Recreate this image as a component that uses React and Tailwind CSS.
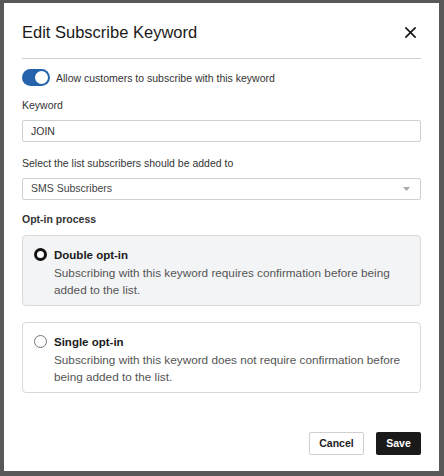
import { useState } from "react";

function Radio({ checked }) {
    if (checked) {
        return <span className="mt-[1px] h-[13px] w-[13px] shrink-0 rounded-full border-[3px] border-[#111] bg-white" />;
    }
    return <span className="mt-[1px] h-[13px] w-[13px] shrink-0 rounded-full border border-[#777] bg-white" />;
}

function OptionCard({ checked, title, text, onClick }) {
    return (
        <div
            onClick={onClick}
            className={`flex h-[71px] cursor-pointer gap-[7px] rounded border border-[#d9d9d9] pl-[11px] pr-[12px] pt-[11px] ${checked ? "bg-[#f3f4f6]" : "bg-white"}`}
        >
            <Radio checked={checked} />
            <div>
                <div className="text-[11.5px] font-bold leading-[16px] text-[#1a1a1a]">{title}</div>
                <div className="mt-[1px] text-[11.75px] leading-[17px] text-[#555]">{text}</div>
            </div>
        </div>
    );
}

export default function App() {
    const [enabled, setEnabled] = useState(true);
    const [keyword, setKeyword] = useState("JOIN");
    const [optIn, setOptIn] = useState("double");

    return (
        <div className="h-[476px] w-[444px] bg-[#585858] pt-[3px] pl-[4px]" style={{ fontFamily: '"Liberation Sans", Arial, sans-serif' }}>
            <div className="h-[468px] w-[435px] bg-white px-[18px]">
                {/* Header */}
                <div className="flex h-[56px] items-center justify-between border-b border-[#cfcfcf] pt-[3px]">
                    <h1 className="text-[16.5px] text-[#1a1a1a]">Edit Subscribe Keyword</h1>
                    <button className="mr-[4px] text-[#1a1a1a]">
                        <svg width="13" height="13" viewBox="0 0 14 14" fill="none" stroke="currentColor" strokeWidth="1.8" strokeLinecap="round">
                            <path d="M2 2L12 12M12 2L2 12" />
                        </svg>
                    </button>
                </div>

                {/* Toggle */}
                <div className="mt-[10px] flex h-[17px] items-center gap-[6px]">
                    <button
                        onClick={() => setEnabled(!enabled)}
                        className={`flex h-[17px] w-[28px] items-center rounded-full px-[2px] ${enabled ? "justify-end bg-[#2563ad]" : "justify-start bg-[#ccc]"}`}
                    >
                        <span className="h-[13px] w-[13px] rounded-full bg-white" />
                    </button>
                    <span className="text-[10.5px] leading-[14px] text-[#333]">Allow customers to subscribe with this keyword</span>
                </div>

                {/* Keyword */}
                <label className="mt-[12px] block text-[10.5px] leading-[14px] text-[#333]">Keyword</label>
                <input
                    value={keyword}
                    onChange={(e) => setKeyword(e.target.value)}
                    className="mt-[8px] block h-[22px] w-full rounded-[2px] border border-[#cfcfcf] px-[8px] text-[10.5px] text-[#333] outline-none"
                />

                {/* List select */}
                <label className="mt-[14px] block text-[10.5px] leading-[14px] text-[#333]">Select the list subscribers should be added to</label>
                <div className="mt-[8px] flex h-[22px] items-center justify-between rounded-[2px] border border-[#cfcfcf] px-[8px]">
                    <span className="text-[10.5px] text-[#444]">SMS Subscribers</span>
                    <svg width="7" height="4" viewBox="0 0 7 4" className="mr-[2px]">
                        <path d="M0 0H7L3.5 4Z" fill="#aaa" />
                    </svg>
                </div>

                {/* Opt-in */}
                <label className="mt-[12px] block text-[10.5px] font-bold leading-[14px] text-[#333]">Opt-in process</label>
                <div className="mt-[9px] flex flex-col gap-[16px]">
                    <OptionCard
                        checked={optIn === "double"}
                        onClick={() => setOptIn("double")}
                        title="Double opt-in"
                        text="Subscribing with this keyword requires confirmation before being added to the list."
                    />
                    <OptionCard
                        checked={optIn === "single"}
                        onClick={() => setOptIn("single")}
                        title="Single opt-in"
                        text="Subscribing with this keyword does not require confirmation before being added to the list."
                    />
                </div>

                {/* Footer */}
                <div className="mt-[39px] flex justify-end gap-[12px]">
                    <button className="h-[23px] w-[55px] rounded-[2px] border border-[#cfcfcf] bg-white text-[10.5px] font-bold text-[#222]">Cancel</button>
                    <button className="h-[23px] w-[45px] rounded-[2px] bg-[#1a1a1a] text-[10.5px] font-bold text-white">Save</button>
                </div>
            </div>
        </div>
    );
}
